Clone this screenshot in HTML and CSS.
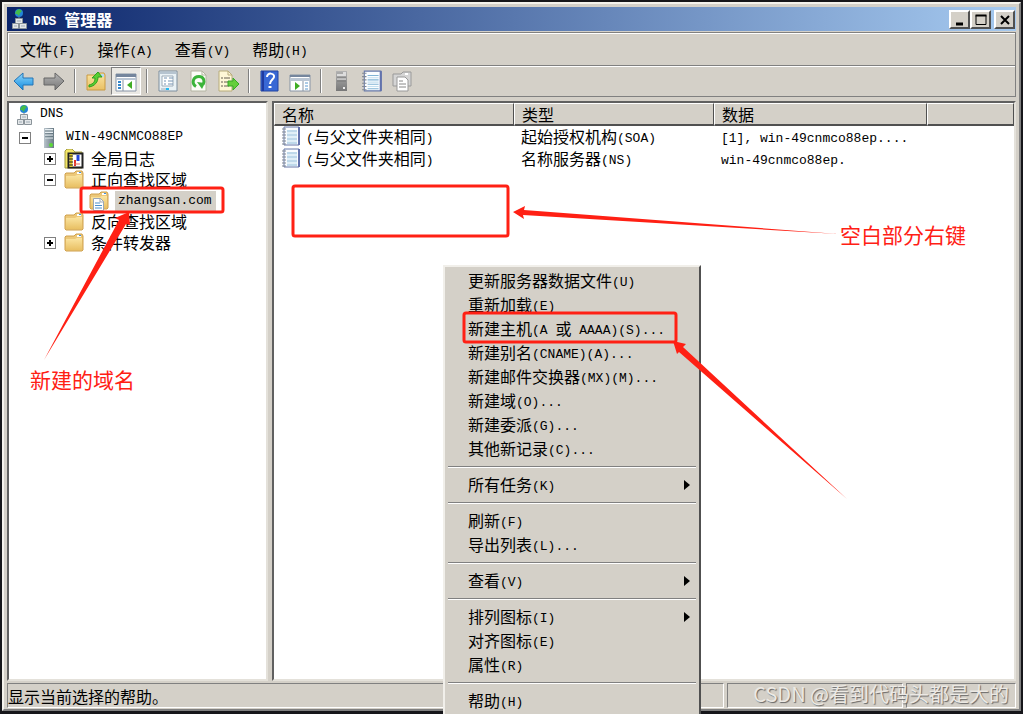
FILE: index.html
```
<!DOCTYPE html>
<html lang="zh-CN">
<head>
    <meta charset="utf-8">
    <title>DNS 管理器</title>
    <meta name="viewport" content="width=device-width, initial-scale=1">
    <link rel="stylesheet" href="styles.css">
</head>
<body>
    <!-- shared icons -->
    <svg class="sprites" aria-hidden="true">
        <defs>
            <linearGradient id="blue" x1="0" y1="0" x2="0" y2="1"><stop offset="0" stop-color="#8fd6fa"/><stop offset="1" stop-color="#128ce0"/></linearGradient>
            <linearGradient id="grey" x1="0" y1="0" x2="0" y2="1"><stop offset="0" stop-color="#b4b4b4"/><stop offset="1" stop-color="#777"/></linearGradient>
            <linearGradient id="gold" x1="0" y1="0" x2="0" y2="1"><stop offset="0" stop-color="#fbe5a2"/><stop offset="1" stop-color="#e9c064"/></linearGradient>
            <linearGradient id="steel" x1="0" y1="0" x2="1" y2="0"><stop offset="0" stop-color="#b9c4cb"/><stop offset="1" stop-color="#687984"/></linearGradient>
        </defs>
        <symbol id="dns" viewBox="0 0 18 22">
            <circle cx="8" cy="5" r="4" fill="#2384d8"/><path d="M5 3l3-2 3 2-2 2-1 3-2-2-2 0z" fill="#43bb4a"/>
            <path d="M8 9v2" stroke="#888"/>
            <g fill="#e4e7e9" stroke="#8b949a"><path d="M4.500 10.500h7v5h-7zM1.500 15.500h6v5h-6zM8.500 15.500h7v5h-7z"/></g>
            <path d="M6 13h4M3 18h3M10 18h4" stroke="#9eabb4"/>
        </symbol>
        <symbol id="server" viewBox="0 0 18 22">
            <path d="M4 1h10v20H4z" fill="url(#steel)"/><path d="M5 2h8v4H5z" fill="#e6edf1"/>
            <path d="M5 4h8M5 7h8M5 10h8" stroke="#546873"/><path d="M5 8h8M5 11h8" stroke="#e6edf1"/>
            <circle cx="11" cy="18" r="2" fill="#5bd936"/>
        </symbol>
        <symbol id="log" viewBox="0 0 20 20">
            <path d="M1 2l2-2h5l3 3h7v16H1z" fill="#f4e767" stroke="#a29b45"/>
            <path d="M4.500 4.500h14v14h-14z" fill="#fff" stroke="#222" stroke-width="2"/>
            <path d="M7 5v13" stroke="#dfca2a" stroke-width="3"/><path d="M4 7h5M4 10h5M4 13h5M4 16h5" stroke="#222"/>
            <path d="M11 11v6" stroke="#e23329" stroke-width="2"/><path d="M14 6v6" stroke="#2346db" stroke-width="3"/><path d="M10 15h6" stroke="#e56b5d"/>
        </symbol>
        <symbol id="folder" viewBox="0 0 20 20">
            <path d="M1 4l1-1h8l2-2h6l1 2v14l-1 1H2l-1-1z" fill="#ecc879" stroke="#cfa04d"/>
            <path d="M13 2h4v2h-4z" fill="#fff"/><path d="M15 2h2v1h-2z" fill="#3f91df"/>
            <path d="M2 6h9l2-1h5v12H2z" fill="url(#gold)"/>
        </symbol>
        <symbol id="zone" viewBox="0 0 20 20">
            <use href="#folder"/>
            <path d="M4.500 7.500h7l3 3v9h-10z" fill="#fff" stroke="#9ba7b5"/><path d="M11 7v4h4" fill="none" stroke="#9ba7b5"/>
            <path d="M6 12h5M6 14.500h7M6 17h7" stroke="#4a8fcd"/>
        </symbol>
        <symbol id="record" viewBox="0 0 20 20">
            <path d="M3 1h15v18H3z" fill="#fafdff" stroke="#6779aa"/><path d="M18 1v18" stroke="#6373ad" stroke-width="2"/>
            <path d="M6 5h10M6 9h10M6 13h10M6 17h10" stroke="#82b4d5"/><path d="M6 7h10M6 11h10M6 15h10" stroke="#c5e0ef"/>
            <path d="M1 3h4M1 6h4M1 9h4M1 12h4M1 15h4M1 18h4" stroke="#818993"/>
        </symbol>
    </svg>

    <div class="window">
        <header class="titlebar">
            <svg class="title-icon"><use href="#dns"/></svg>
            <h1><span class="en">DNS </span>管理器</h1>
            <div class="controls">
                <button type="button" aria-label="最小化"><svg viewBox="0 0 16 14"><path d="M4 11h7" stroke="#000" stroke-width="3"/></svg></button>
                <button type="button" aria-label="最大化"><svg viewBox="0 0 16 14"><path d="M3 2.500h10v9H3z" fill="none" stroke="#000"/><path d="M2.500 2.500h11" stroke="#000" stroke-width="2"/></svg></button>
                <button type="button" class="close" aria-label="关闭"><svg viewBox="0 0 16 14"><path d="M4 3l8 8M12 3l-8 8" stroke="#000" stroke-width="2"/></svg></button>
            </div>
        </header>

        <nav class="menubar">
            <button type="button">文件<span class="en">(F)</span></button>
            <button type="button">操作<span class="en">(A)</span></button>
            <button type="button">查看<span class="en">(V)</span></button>
            <button type="button">帮助<span class="en">(H)</span></button>
        </nav>

        <div class="toolbar">
            <button type="button" aria-label="后退"><svg viewBox="0 0 22 22"><path d="M1 11l9-8v5h10v7H10v5z" fill="url(#blue)" stroke="#2474b5"/></svg></button>
            <button type="button" aria-label="前进"><svg viewBox="0 0 22 22"><path d="M21 11l-9-8v5H1v7h11v5z" fill="url(#grey)" stroke="#666"/></svg></button>
            <span class="sep"></span>
            <button type="button" aria-label="向上"><svg viewBox="0 0 22 22"><path d="M2 5h8l2-2h7l1 2v15H2z" fill="url(#gold)" stroke="#c99a43"/><path d="M16 4h3v3h-3z" fill="#b7d9f1"/><path d="M4 15c5-1 6-4 6-7H7l6-6 4 5h-4c0 5-3 9-9 10z" fill="#58cf31" stroke="#2e9e20"/></svg></button>
            <button type="button" class="pressed" aria-label="显示控制台树"><svg viewBox="0 0 22 22"><path d="M1 4h20v17H1z" fill="#fff" stroke="#8794a5"/><path d="M1 4h20v3H1z" fill="#75869d"/><path d="M1 8h20v2H1z" fill="#bac6d4"/><path d="M8 10v11" stroke="#8794a5"/><path d="M3 12h3M3 15h3M3 18h3" stroke="#3387cc" stroke-width="2"/><path d="M17 11v8l-5-4z" fill="#41ad24"/></svg></button>
            <span class="sep"></span>
            <button type="button" aria-label="属性"><svg viewBox="0 0 22 22"><path d="M2 1h18v20H2z" fill="#eaf2f6" stroke="#7d8e9e"/><path d="M3 2h16v2H3z" fill="#b6c4d0"/><path d="M5 6h11v10H5z" fill="#fff" stroke="#9cabb8"/><path d="M7 8h3M12 8h4M7 11h2M11 11h5M7 14h2M11 14h5" stroke="#7594b4"/><path d="M4 19h8" stroke="#9cabb8"/><path d="M9 19h3" stroke="#22baf0" stroke-width="2"/></svg></button>
            <button type="button" aria-label="刷新"><svg viewBox="0 0 22 22"><path d="M4 1h11l4 4v16H4z" fill="#fcfdf7" stroke="#b4b4a2"/><path d="M15 1v4h4" fill="none" stroke="#b4b4a2"/><path d="M9 16.500c-5-3-3-10 3-10 5 0 6 5 4 8" fill="none" stroke="#3bb43a" stroke-width="3"/><path d="M10 12l8 1-3 6z" fill="#3bb43a"/></svg></button>
            <button type="button" aria-label="导出列表"><svg viewBox="0 0 22 22"><path d="M2 1h9l4 4v16H2z" fill="#fff8d7" stroke="#b8ac7b"/><path d="M11 1v4h4" fill="none" stroke="#b8ac7b"/><path d="M4 8h2M4 12h2M4 16h2M7 8h6M7 12h5M7 16h5" stroke="#665e50"/><path d="M11 11h5V8l6 6-6 6v-4h-5z" fill="#65ce3c" stroke="#37a828"/></svg></button>
            <span class="sep"></span>
            <button type="button" aria-label="帮助"><svg viewBox="0 0 22 22"><path d="M2 1h17v20H2z" fill="#3868d5" stroke="#2345a1"/><path d="M4 1v20" stroke="#1f3ba1" stroke-width="2"/><path d="M8 7c0-5 8-4 7 0 0 2-4 3-4 7" fill="none" stroke="#fff" stroke-width="2"/><path d="M11 16v2" stroke="#fff" stroke-width="3"/></svg></button>
            <button type="button" aria-label="操作窗格"><svg viewBox="0 0 22 22"><path d="M1 5h20v16H1z" fill="#fff" stroke="#8794a5"/><path d="M1 5h20v2H1z" fill="#75869d"/><path d="M1 8h20v3H1z" fill="#bac6d4"/><path d="M14 11v10" stroke="#8794a5"/><path d="M16 13h3M16 16h3M16 19h3" stroke="#5a98ce"/><path d="M6 12v8l5-4z" fill="#41ad24"/></svg></button>
            <span class="sep"></span>
            <button type="button" aria-label="新建服务器"><svg viewBox="0 0 22 22"><path d="M5 1h11v20H5z" fill="url(#grey)"/><path d="M6 2h9v4H6z" fill="#ddd"/><path d="M6 3h6M6 8h9M6 11h9" stroke="#777"/><path d="M6 9h9" stroke="#eee"/><path d="M12 18h2" stroke="#eee" stroke-width="2"/></svg></button>
            <button type="button" aria-label="新建记录"><svg><use href="#record"/></svg></button>
            <button type="button" aria-label="新建区域"><svg viewBox="0 0 22 22"><path d="M2 4h8l2-2h8v14H2z" fill="#d5d5d5" stroke="#999"/><path d="M14 4h3" stroke="#fff" stroke-width="2"/><path d="M6 7h8l3 3v11H6z" fill="#fff" stroke="#999"/><path d="M8 11h4M8 14h7M8 17h7" stroke="#888"/></svg></button>
        </div>

        <main class="panes">
            <ul class="tree">
                <li class="root"><svg class="icon tall"><use href="#dns"/></svg><span class="label en">DNS</span></li>
                <li class="level1"><button type="button" class="expander minus" aria-label="折叠"></button><svg class="icon tall"><use href="#server"/></svg><span class="label en">WIN-49CNMCO88EP</span></li>
                <li class="level2"><button type="button" class="expander plus" aria-label="展开"></button><svg class="icon"><use href="#log"/></svg><span class="label">全局日志</span></li>
                <li class="level2"><button type="button" class="expander minus" aria-label="折叠"></button><svg class="icon"><use href="#folder"/></svg><span class="label">正向查找区域</span></li>
                <li class="level3"><svg class="icon"><use href="#zone"/></svg><span class="label en selected">zhangsan.com</span></li>
                <li class="level2"><span class="no-expander"></span><svg class="icon"><use href="#folder"/></svg><span class="label">反向查找区域</span></li>
                <li class="level2"><button type="button" class="expander plus" aria-label="展开"></button><svg class="icon"><use href="#folder"/></svg><span class="label">条件转发器</span></li>
            </ul>

            <div class="list">
                <table>
                    <colgroup><col class="col-name"><col class="col-type"><col class="col-data"><col></colgroup>
                    <thead>
                        <tr><th>名称</th><th>类型</th><th>数据</th><th></th></tr>
                    </thead>
                    <tbody>
                        <tr>
                            <td><div class="name"><svg class="icon"><use href="#record"/></svg><span><span class="en">(</span>与父文件夹相同<span class="en">)</span></span></div></td>
                            <td>起始授权机构<span class="en">(SOA)</span></td>
                            <td><span class="en">[1], win-49cnmco88ep....</span></td>
                            <td></td>
                        </tr>
                        <tr>
                            <td><div class="name"><svg class="icon"><use href="#record"/></svg><span><span class="en">(</span>与父文件夹相同<span class="en">)</span></span></div></td>
                            <td>名称服务器<span class="en">(NS)</span></td>
                            <td><span class="en">win-49cnmco88ep.</span></td>
                            <td></td>
                        </tr>
                    </tbody>
                </table>
            </div>
        </main>

        <footer class="statusbar">
            <div class="status-text">显示当前选择的帮助。</div>
            <div class="status-mid"></div>
            <div class="status-end"></div>
        </footer>
    </div>

    <div class="context-menu">
        <button type="button">更新服务器数据文件<span class="en">(U)</span></button>
        <button type="button">重新加载<span class="en">(E)</span></button>
        <button type="button">新建主机<span class="en">(A </span>或<span class="en"> AAAA)(S)...</span></button>
        <button type="button">新建别名<span class="en">(CNAME)(A)...</span></button>
        <button type="button">新建邮件交换器<span class="en">(MX)(M)...</span></button>
        <button type="button">新建域<span class="en">(O)...</span></button>
        <button type="button">新建委派<span class="en">(G)...</span></button>
        <button type="button">其他新记录<span class="en">(C)...</span></button>
        <hr>
        <button type="button" class="submenu">所有任务<span class="en">(K)</span></button>
        <hr>
        <button type="button">刷新<span class="en">(F)</span></button>
        <button type="button">导出列表<span class="en">(L)...</span></button>
        <hr>
        <button type="button" class="submenu">查看<span class="en">(V)</span></button>
        <hr>
        <button type="button" class="submenu">排列图标<span class="en">(I)</span></button>
        <button type="button">对齐图标<span class="en">(E)</span></button>
        <button type="button">属性<span class="en">(R)</span></button>
        <hr>
        <button type="button">帮助<span class="en">(H)</span></button>
    </div>

    <!-- notes drawn over the window -->
    <svg class="marks" width="1023" height="714" viewBox="0 0 1023 714" aria-hidden="true">
        <g fill="none" stroke="#ff2014" stroke-width="3">
            <rect x="81" y="188" width="142" height="24" rx="2"/>
            <rect x="293" y="186" width="215" height="50" rx="2"/>
            <rect x="464" y="313" width="212" height="29" rx="2"/>
        </g>
        <g fill="#ff2014">
            <path d="M129 212l1 13-4-1L44 360l75-140-4-2z"/>
            <path d="M513 212l12-6-1 4 314 24-315-19 1 4z"/>
            <path d="M673 341l13 3-3 3 164 152-168-147-2 2z"/>
        </g>
    </svg>
    <p class="note note-domain">新建的域名</p>
    <p class="note note-blank">空白部分右键</p>
    <p class="watermark">CSDN @看到代码头都是大的</p>
</body>
</html>
```
FILE: styles.css
```
* {
    box-sizing: border-box;
}

body {
    margin: 0;
    padding: 2px 2px 3px;
    height: 100vh;
    display: flex;
    position: relative;
    overflow: hidden;
    background: #16161a;
    color: #000;
    font-family: "Noto Sans CJK SC", sans-serif;
    font-size: 16px;
    line-height: 20px;
}

button {
    margin: 0;
    padding: 0;
    border: 0;
    background: none;
    color: inherit;
    font: inherit;
}

.en {
    font-family: "Liberation Mono", monospace;
    font-size: 13px;
    line-height: 14px;
    vertical-align: 1px;
    white-space: pre;
}

.sprites {
    position: absolute;
    width: 0;
    height: 0;
}

.window {
    flex: 1;
    min-width: 0;
    display: flex;
    flex-direction: column;
    padding: 3px 3px 1px;
    background: #d4d0c8;
    border: 2px solid;
    border-color: #f4f2ec #808080 #808080 #f4f2ec;
}

/* title bar */
.titlebar {
    display: flex;
    align-items: center;
    height: 24px;
    padding: 0 1px 0 4px;
    background: linear-gradient(to right, #0a246a, #a6caf0);
}

.title-icon {
    width: 18px;
    height: 22px;
}

.titlebar h1 {
    flex: 1;
    margin: 0 0 0 4px;
    color: #fff;
    font-size: 16px;
    line-height: 22px;
    font-weight: bold;
}

.controls {
    display: flex;
}

.controls button {
    width: 21px;
    height: 19px;
    padding: 1px;
    background: #d4d0c8;
    border: 2px solid;
    border-color: #fff #505050 #505050 #fff;
}

.controls .close {
    margin-left: 3px;
}

.controls svg {
    display: block;
    width: 16px;
    height: 14px;
}

/* menu bar and toolbar */
.menubar,
.toolbar {
    display: flex;
    align-items: center;
    border: 1px solid #808080;
    box-shadow: inset 1px 1px #fff;
}

.menubar {
    height: 33px;
    margin-top: 1px;
    padding-left: 1px;
    border-bottom: 0;
}

.menubar button {
    padding: 0 11px;
}

.toolbar {
    height: 32px;
    padding-left: 1px;
}

.toolbar button {
    display: flex;
    align-items: center;
    justify-content: center;
    width: 30px;
    height: 28px;
}

.toolbar svg {
    width: 22px;
    height: 22px;
}

.toolbar .pressed {
    background: #ebe9e4;
    border: 1px solid;
    border-color: #808080 #fff #fff #808080;
}

.sep {
    width: 2px;
    height: 24px;
    margin: 0 5px;
    border-left: 1px solid #808080;
    border-right: 1px solid #fff;
}

/* panes */
.panes {
    flex: 1;
    min-height: 0;
    display: flex;
    gap: 4px;
    margin-top: 4px;
}

.tree,
.list {
    background: #fff;
    border: 2px solid;
    border-color: #606060 #e4e1da #e4e1da #606060;
}

.tree {
    flex: 0 0 261px;
    margin: 0;
    padding: 0;
    list-style: none;
}

.tree li {
    display: flex;
    align-items: center;
    gap: 6px;
    height: 21px;
}

.tree .root {
    height: 24px;
    padding-left: 6px;
    gap: 4px;
}

.tree .level1 {
    padding-left: 10px;
}

.tree .level2 {
    padding-left: 35px;
}

.tree .level3 {
    padding-left: 80px;
}

.icon {
    flex: none;
    width: 20px;
    height: 20px;
}

.tall {
    height: 22px;
}

.expander,
.no-expander {
    flex: none;
    width: 12px;
    height: 12px;
    margin-right: 2px;
}

.expander {
    border: 1px solid #808080;
    background: linear-gradient(#000, #000) center / 6px 2px no-repeat;
}

.plus {
    background: linear-gradient(#000, #000) center / 6px 2px no-repeat, linear-gradient(#000, #000) center / 2px 6px no-repeat;
}

.label {
    padding: 0 1px 2px;
}

.selected {
    padding: 3px 4px 3px 3px;
    background: #d4d0c8;
}

.list {
    flex: 1;
    min-width: 0;
}

table {
    width: 100%;
    table-layout: fixed;
    border-collapse: separate;
    border-spacing: 0;
}

.col-name {
    width: 240px;
}

.col-type {
    width: 200px;
}

.col-data {
    width: 213px;
}

th {
    height: 23px;
    padding: 0 7px;
    text-align: left;
    font-weight: normal;
    background: #d4d0c8;
    border: 1px solid;
    border-color: #fff #505050 #505050 #fff;
    border-bottom-width: 2px;
}

td {
    height: 22px;
    padding: 0 7px 2px;
    white-space: nowrap;
}

.name {
    display: flex;
    align-items: center;
    gap: 5px;
}

/* status bar */
.statusbar {
    display: flex;
    gap: 3px;
    height: 25px;
    margin-top: 2px;
}

.statusbar div {
    border: 1px solid;
    border-color: #808080 #fff #fff #808080;
}

.status-text {
    flex: 1;
    line-height: 24px;
}

.status-mid {
    width: 176px;
}

.status-end {
    width: 110px;
}

/* context menu */
.context-menu {
    position: absolute;
    left: 443px;
    top: 265px;
    width: 258px;
    padding: 2px 3px;
    background: #d4d0c8;
    border: 2px solid;
    border-color: #f1efea #505050 #505050 #f1efea;
}

.context-menu button {
    display: block;
    width: 100%;
    height: 24px;
    padding: 0 6px 2px 20px;
    text-align: left;
    white-space: nowrap;
}

.submenu::after {
    content: "";
    float: right;
    margin-top: 6px;
    border: 5px solid transparent;
    border-left: 6px solid #000;
    border-right: 0;
}

.context-menu hr {
    height: 2px;
    margin: 5px 0;
    border: 0;
    border-top: 1px solid #808080;
    border-bottom: 1px solid #fff;
}

/* notes */
.marks {
    position: absolute;
    left: 0;
    top: 0;
    pointer-events: none;
}

.note {
    position: absolute;
    margin: 0;
    color: #ff2014;
    font-size: 21px;
    line-height: 28px;
}

.note-domain {
    left: 30px;
    top: 365px;
}

.note-blank {
    left: 840px;
    top: 220px;
}

.watermark {
    position: absolute;
    right: 14px;
    bottom: 8px;
    margin: 0;
    color: #ece9e4;
    font-size: 20px;
    line-height: 24px;
    text-shadow: 1px 1px 1px #666;
}
```
